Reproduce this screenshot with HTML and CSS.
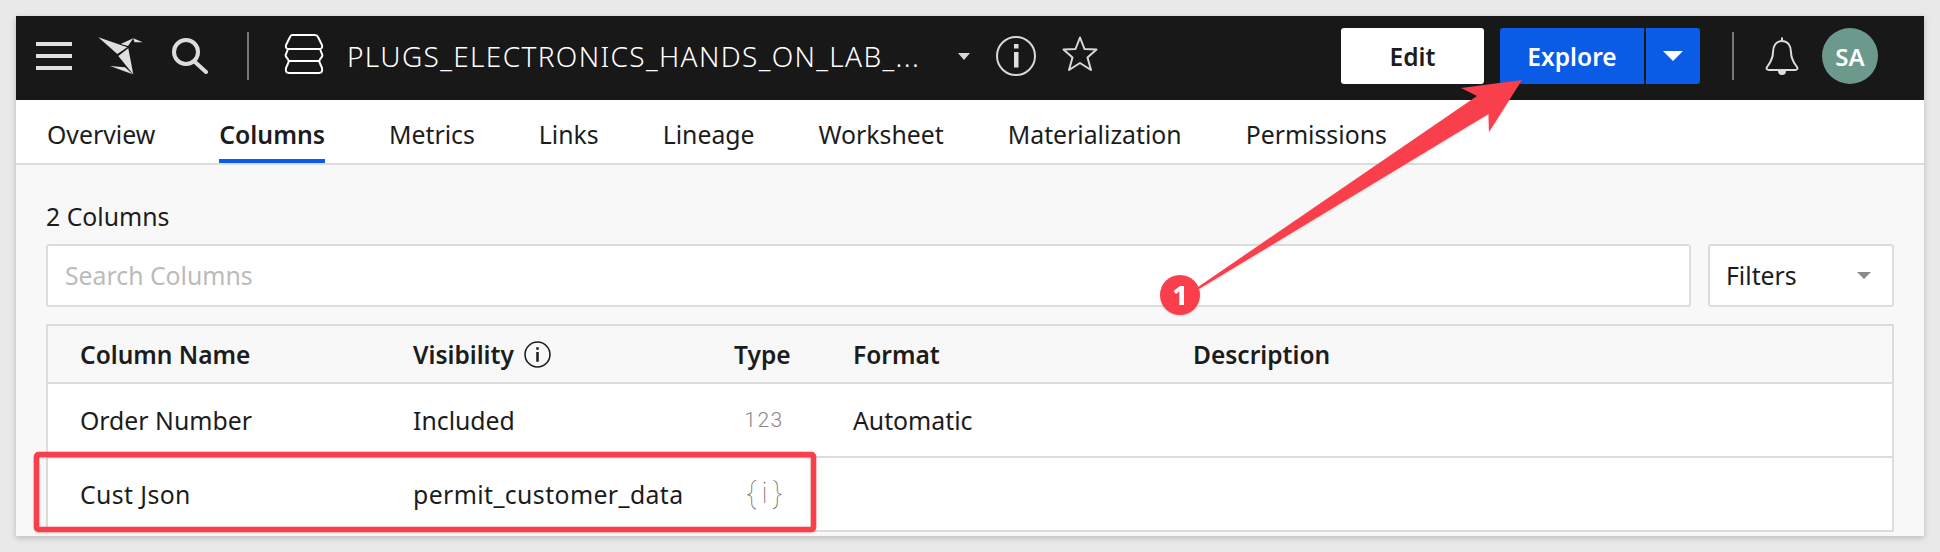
FILE: index.html
```html
<!DOCTYPE html>
<html>
<head>
    <title>Plugs Electronics - Columns</title>
    <link rel="stylesheet" href="styles.css">
</head>
<body>
    <div class="window">
        <header class="topbar">
            <svg class="icon-burger" viewBox="0 0 36 28"><path d="M0 0h36v4H0zM0 12h36v4H0zM0 24h36v4H0z"/></svg>
            <svg class="icon-logo" viewBox="98 37 46 38">
                <path d="M98.3 37.3L127.3 47.3 117.3 54z"/>
                <path d="M118.3 56L128.3 48.3 133.3 74.5z"/>
                <path d="M110 66L125 67.3 132.7 74.3z"/>
                <path d="M120.7 44L133.3 38.3 128 46z"/>
                <path d="M133.3 38.3L142.7 42.3 134.5 42.3z"/>
            </svg>
            <svg class="icon-search" viewBox="0 0 36 36"><circle cx="14" cy="14" r="12"/><path d="M23 24l11 10"/></svg>
            <span class="divider first"></span>
            <svg class="icon-stack" viewBox="0 0 40 44">
                <path d="M8 1H31Q33 1 34 3L38 11Q39 15 35 15H5Q1 15 2 11L6 3Q7 1 8 1Z"/>
                <path d="M4 15L2 20Q1 22 3 24L5 27H35L37 24Q39 22 38 20L36 15"/>
                <path d="M5 27L2 34Q1 39 5 39H35Q39 39 38 34L35 27"/>
            </svg>
            <span class="title">PLUGS_ELECTRONICS_HANDS_ON_LAB_...</span>
            <span class="caret title-caret"></span>
            <svg class="icon-info" viewBox="0 0 40 40"><circle cx="20" cy="20" r="19"/><path class="dot" d="M18 8h4.500v4.500H18zM18 16h4.500v15.500H18z"/></svg>
            <svg class="icon-star" viewBox="0 0 36 40"><path d="M18 1.500L22.500 13 34.500 13.500 25.500 21.500 29 34 18 27 7 34 10.500 21.500 1.500 13.500 13.500 13Z"/></svg>

            <div class="actions">
                <button class="btn-edit">Edit</button>
                <button class="btn-explore">Explore</button>
                <button class="btn-more"><span class="caret"></span></button>
                <span class="divider second"></span>
                <svg class="icon-bell" viewBox="0 0 34 40">
                    <path d="M17 5C11 5 8 10 8 16C8 24 4 28 2 31C1 33 2 34 4 34H30C32 34 33 33 32 31C30 28 26 24 26 16C26 10 23 5 17 5ZM17 1.500V5"/>
                    <path class="dot" d="M13 35H21A4 4 0 0 1 13 35Z"/>
                </svg>
                <div class="avatar">SA</div>
            </div>
        </header>

        <nav class="tabs">
            <a>Overview</a>
            <a class="active">Columns</a>
            <a>Metrics</a>
            <a>Links</a>
            <a>Lineage</a>
            <a>Worksheet</a>
            <a>Materialization</a>
            <a>Permissions</a>
        </nav>

        <main class="content">
            <div class="count">2 Columns</div>
            <div class="search-row">
                <div class="search">Search Columns</div>
                <div class="filters">Filters<span class="caret"></span></div>
            </div>
            <div class="table">
                <div class="row head">
                    <div>Column Name</div>
                    <div class="vis">Visibility
                        <svg class="icon-info-small" viewBox="0 0 26 26"><circle cx="13" cy="13" r="12"/><path d="M11.800 6h2.400v2.400h-2.400zM11.800 10.500h2.400v9.500h-2.400z"/></svg>
                    </div>
                    <div>Type</div>
                    <div>Format</div>
                    <div>Description</div>
                </div>
                <div class="row">
                    <div>Order Number</div>
                    <div>Included</div>
                    <div class="type-num">123</div>
                    <div>Automatic</div>
                    <div></div>
                </div>
                <div class="row last">
                    <div class="wide">Cust Json</div>
                    <div class="wide">permit_customer_data</div>
                    <div class="type-json">{ i }</div>
                    <div></div>
                    <div></div>
                </div>
            </div>
        </main>
    </div>

    <!-- red annotation over the screenshot -->
    <svg class="markup" viewBox="0 0 1940 552">
        <rect x="36.500" y="454.500" width="777" height="75" rx="2"/>
        <path class="fill" d="M1198 287L1477 96 1461 88 1522 80 1489 132 1488.500 114 1199 289Z"/>
        <circle class="fill" cx="1180" cy="295" r="20"/>
        <text x="1180" y="305">1</text>
    </svg>
</body>
</html>
```

FILE: styles.css
```css
html, body {
    margin: 0;
    padding: 0;
    height: 552px;
    overflow: hidden;
}

body {
    background: #e9e9e9;
    font-family: 'Noto Sans', sans-serif;
    color: #1c1c1c;
    position: relative;
}

.window {
    margin: 16px 16px 0;
    height: 520px;
    background: #f8f8f8;
    box-shadow: 0 2px 6px rgba(0, 0, 0, 0.2);
}

/* top bar */
.topbar {
    height: 80px;
    padding: 0 46px 4px 20px;
    background: #181818;
    display: flex;
    align-items: center;
}

.topbar svg {
    flex: none;
}

.icon-burger {
    width: 36px;
    height: 28px;
    fill: #e0e0e0;
}

.icon-logo {
    width: 46px;
    height: 38px;
    margin-left: 26px;
    fill: #e0e0e0;
}

.icon-search {
    width: 36px;
    height: 36px;
    margin-left: 28px;
    fill: none;
    stroke: #dcdcdc;
    stroke-width: 4;
    stroke-linecap: round;
}

.divider {
    flex: none;
    width: 2px;
    height: 48px;
    background: #777;
}

.divider.first {
    margin-left: 39px;
}

.divider.second {
    margin-left: 32px;
}

.icon-stack {
    width: 40px;
    height: 44px;
    margin-left: 35px;
    fill: none;
    stroke: #fff;
    stroke-width: 2;
}

.title {
    flex: none;
    width: 575px;
    margin-left: 23px;
    color: #fff;
    font-size: 28px;
    font-weight: 300;
    letter-spacing: 1.350px;
    white-space: nowrap;
}

.caret {
    display: inline-block;
    width: 0;
    height: 0;
    border-left: 6px solid transparent;
    border-right: 6px solid transparent;
    border-top: 7px solid #d8d8d8;
}

.title-caret {
    flex: none;
    margin-left: 36px;
}

.icon-info {
    width: 40px;
    height: 40px;
    margin-left: 26px;
    fill: none;
    stroke: #d8d8d8;
    stroke-width: 2;
}

.topbar .dot {
    fill: #e0e0e0;
    stroke: none;
}

.icon-star {
    width: 36px;
    height: 40px;
    margin-left: 26px;
    fill: none;
    stroke: #d8d8d8;
    stroke-width: 2;
    stroke-linejoin: round;
}

.actions {
    margin-left: auto;
    display: flex;
    align-items: center;
}

.actions button {
    height: 56px;
    border: none;
    font-family: inherit;
    font-size: 24.500px;
    font-weight: 600;
}

.btn-edit {
    width: 143px;
    margin-right: 16px;
    background: #fff;
    color: #1c1c1c;
    border-radius: 3px;
}

.btn-explore {
    width: 144px;
    margin-right: 2px;
    background: #0a5ce6;
    color: #fff;
    border-radius: 3px 0 0 3px;
}

.btn-more {
    width: 54px;
    background: #0a5ce6;
    border-radius: 0 3px 3px 0;
    padding: 0;
}

.btn-more .caret {
    display: block;
    margin: 0 auto;
    border-left-width: 10px;
    border-right-width: 10px;
    border-top: 10px solid #fff;
}

.icon-bell {
    width: 34px;
    height: 40px;
    margin-left: 31px;
    fill: none;
    stroke: #dcdcdc;
    stroke-width: 2;
}

.avatar {
    width: 56px;
    height: 56px;
    margin-left: 23px;
    border-radius: 50%;
    background: #6b9a8d;
    color: #fff;
    font-size: 24px;
    font-weight: 600;
    display: flex;
    align-items: center;
    justify-content: center;
}

/* tabs */
.tabs {
    height: 65px;
    box-sizing: border-box;
    padding: 0 0 0 31px;
    background: #fff;
    border-bottom: 2px solid #dcdcdc;
    display: flex;
    gap: 64px;
    font-size: 24.800px;
}

.tabs a {
    height: 59px;
    line-height: 69px;
    white-space: nowrap;
}

.tabs a.active {
    font-weight: 600;
    height: 59px;
    border-bottom: 4px solid #0a5ce6;
}

/* columns list */
.content {
    padding: 38px 30px 0;
    font-size: 24.800px;
}

.count {
    height: 28px;
    line-height: 26px;
    margin-bottom: 13px;
}

.search-row {
    display: flex;
    gap: 17px;
    margin-bottom: 17px;
}

.search,
.filters {
    height: 63px;
    box-sizing: border-box;
    padding: 0 17px;
    line-height: 59px;
    background: #fff;
    border: 2px solid #dcdcdc;
    border-radius: 3px;
}

.search {
    flex: 1;
    color: #bbb;
}

.filters {
    width: 186px;
    display: flex;
    align-items: center;
    justify-content: space-between;
    padding: 0 21px 0 16px;
}

.filters .caret {
    border-left-width: 7px;
    border-right-width: 7px;
    border-top-color: #8a8a8a;
}

.table {
    border: 2px solid #dcdcdc;
    border-bottom: none;
    background: #fff;
}

.row {
    height: 74px;
    box-sizing: border-box;
    padding-left: 32px;
    border-bottom: 2px solid #dcdcdc;
    display: grid;
    grid-template-columns: 333px 321px 119px 340px 1fr;
    align-items: center;
    white-space: nowrap;
}

.row.head {
    height: 58px;
    background: #f8f8f8;
    font-size: 24.500px;
    font-weight: 600;
}

.wide {
    letter-spacing: 0.400px;
}

.vis {
    display: flex;
    align-items: center;
    gap: 10px;
}

.icon-info-small {
    width: 27px;
    height: 27px;
    fill: #1c1c1c;
}

.icon-info-small circle {
    fill: none;
    stroke: #1c1c1c;
    stroke-width: 1.500;
}

.type-num,
.type-json {
    width: 60px;
    text-align: center;
    color: #888;
    font-family: Roboto, sans-serif;
    font-weight: 100;
}

.type-num {
    font-size: 21px;
    font-weight: 300;
    letter-spacing: 1.500px;
}

.type-json {
    font-size: 30px;
    color: #666;
    letter-spacing: -1px;
    padding-bottom: 3px;
}

/* annotation */
.markup {
    position: absolute;
    left: 0;
    top: 0;
    width: 1940px;
    height: 552px;
    filter: drop-shadow(0 1px 1px rgba(0, 0, 0, 0.15));
}

.markup rect {
    fill: none;
    stroke: #f93e4c;
    stroke-width: 5.500;
}

.markup .fill {
    fill: #f93e4c;
}

.markup text {
    fill: #fff;
    font-family: 'Noto Sans', sans-serif;
    font-weight: 800;
    font-size: 27px;
    text-anchor: middle;
}
```
